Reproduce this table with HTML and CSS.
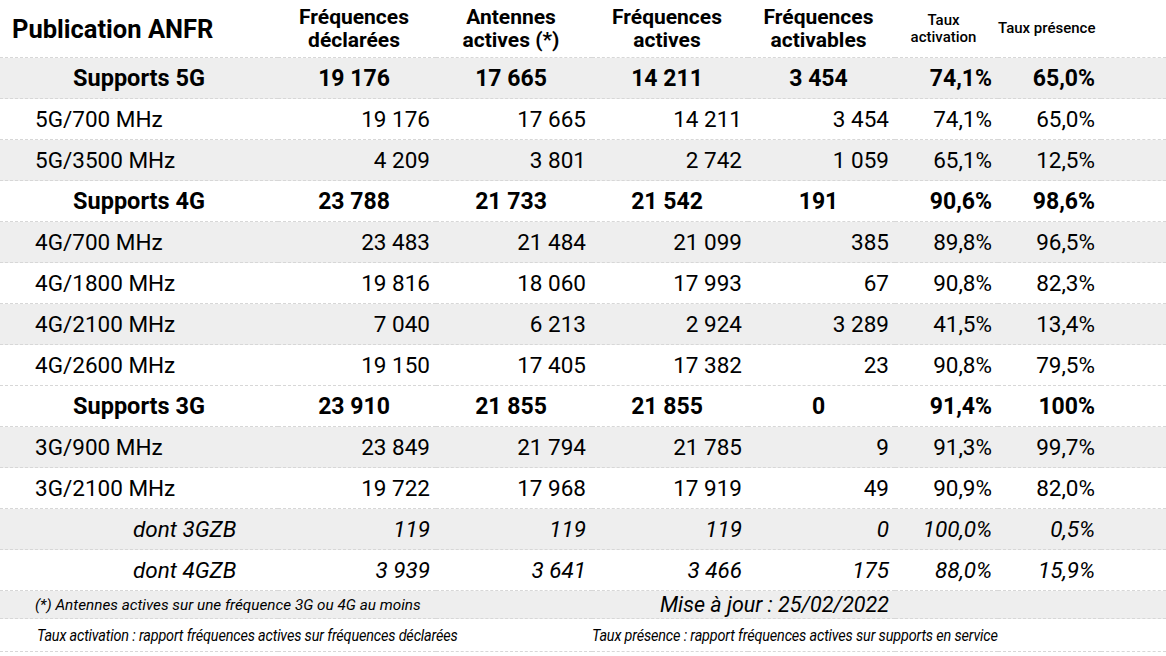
FILE: index.html
```html
<!DOCTYPE html>
<html lang="fr">
<head>
<meta charset="utf-8">
<title>Publication ANFR</title>
<link rel="stylesheet" href="styles.css">
</head>
<body>
<table class="anfr">
  <colgroup>
    <col class="c-label">
    <col class="c-n1">
    <col class="c-n2">
    <col class="c-n3">
    <col class="c-n4">
    <col class="c-p1">
    <col class="c-p2">
    <col class="c-rest">
  </colgroup>
  <thead>
    <tr class="head">
      <th class="title">Publication ANFR</th>
      <th class="colh">Fréquences<br>déclarées</th>
      <th class="colh">Antennes<br>actives (*)</th>
      <th class="colh">Fréquences<br>actives</th>
      <th class="colh">Fréquences<br>activables</th>
      <th class="colh small">Taux<br>activation</th>
      <th class="colh small">Taux présence</th>
      <th></th>
    </tr>
  </thead>
  <tbody>
    <tr class="group gray">
      <td class="glabel">Supports 5G</td>
      <td class="gnum">19 176</td><td class="gnum">17 665</td><td class="gnum">14 211</td><td class="gnum">3 454</td>
      <td class="num">74,1%</td><td class="num">65,0%</td><td></td>
    </tr>
    <tr>
      <td class="label">5G/700 MHz</td>
      <td class="num">19 176</td><td class="num">17 665</td><td class="num">14 211</td><td class="num">3 454</td>
      <td class="num">74,1%</td><td class="num">65,0%</td><td></td>
    </tr>
    <tr class="gray">
      <td class="label">5G/3500 MHz</td>
      <td class="num">4 209</td><td class="num">3 801</td><td class="num">2 742</td><td class="num">1 059</td>
      <td class="num">65,1%</td><td class="num">12,5%</td><td></td>
    </tr>
    <tr class="group">
      <td class="glabel">Supports 4G</td>
      <td class="gnum">23 788</td><td class="gnum">21 733</td><td class="gnum">21 542</td><td class="gnum">191</td>
      <td class="num">90,6%</td><td class="num">98,6%</td><td></td>
    </tr>
    <tr class="gray">
      <td class="label">4G/700 MHz</td>
      <td class="num">23 483</td><td class="num">21 484</td><td class="num">21 099</td><td class="num">385</td>
      <td class="num">89,8%</td><td class="num">96,5%</td><td></td>
    </tr>
    <tr>
      <td class="label">4G/1800 MHz</td>
      <td class="num">19 816</td><td class="num">18 060</td><td class="num">17 993</td><td class="num">67</td>
      <td class="num">90,8%</td><td class="num">82,3%</td><td></td>
    </tr>
    <tr class="gray">
      <td class="label">4G/2100 MHz</td>
      <td class="num">7 040</td><td class="num">6 213</td><td class="num">2 924</td><td class="num">3 289</td>
      <td class="num">41,5%</td><td class="num">13,4%</td><td></td>
    </tr>
    <tr>
      <td class="label">4G/2600 MHz</td>
      <td class="num">19 150</td><td class="num">17 405</td><td class="num">17 382</td><td class="num">23</td>
      <td class="num">90,8%</td><td class="num">79,5%</td><td></td>
    </tr>
    <tr class="group">
      <td class="glabel">Supports 3G</td>
      <td class="gnum">23 910</td><td class="gnum">21 855</td><td class="gnum">21 855</td><td class="gnum">0</td>
      <td class="num">91,4%</td><td class="num">100%</td><td></td>
    </tr>
    <tr class="gray">
      <td class="label">3G/900 MHz</td>
      <td class="num">23 849</td><td class="num">21 794</td><td class="num">21 785</td><td class="num">9</td>
      <td class="num">91,3%</td><td class="num">99,7%</td><td></td>
    </tr>
    <tr>
      <td class="label">3G/2100 MHz</td>
      <td class="num">19 722</td><td class="num">17 968</td><td class="num">17 919</td><td class="num">49</td>
      <td class="num">90,9%</td><td class="num">82,0%</td><td></td>
    </tr>
    <tr class="gray sub">
      <td class="slabel">dont 3GZB</td>
      <td class="num">119</td><td class="num">119</td><td class="num">119</td><td class="num">0</td>
      <td class="num">100,0%</td><td class="num">0,5%</td><td></td>
    </tr>
    <tr class="sub">
      <td class="slabel">dont 4GZB</td>
      <td class="num">3 939</td><td class="num">3 641</td><td class="num">3 466</td><td class="num">175</td>
      <td class="num">88,0%</td><td class="num">15,9%</td><td></td>
    </tr>
    <tr class="gray note">
      <td colspan="3" class="note-text">(*) Antennes actives sur une fréquence 3G ou 4G au moins</td>
      <td colspan="2" class="update">Mise à jour : 25/02/2022</td>
      <td colspan="3"></td>
    </tr>
    <tr class="legend">
      <td colspan="3" class="legend-left"><span class="cond">Taux activation : rapport fréquences actives sur fréquences déclarées</span></td>
      <td colspan="5" class="legend-right"><span class="cond">Taux présence : rapport fréquences actives sur supports en service</span></td>
    </tr>
  </tbody>
</table>
</body>
</html>
```

FILE: styles.css
```css
html, body {
  margin: 0;
  padding: 0;
  background: #ffffff;
}

body {
  font-family: Roboto, "Liberation Sans", sans-serif;
  color: #000;
  width: 1166px;
  height: 656px;
  overflow: hidden;
}

.anfr {
  width: 1166px;
  border-collapse: collapse;
  table-layout: fixed;
}

.c-label { width: 278px; }
.c-n1 { width: 158px; }
.c-n2 { width: 156px; }
.c-n3 { width: 156px; }
.c-n4 { width: 147px; }
.c-p1 { width: 103px; }
.c-p2 { width: 103px; }
.c-rest { width: 65px; }

.anfr th,
.anfr td {
  padding: 0;
  vertical-align: middle;
  white-space: nowrap;
  border-bottom: 1px dashed #d7d7d7;
}

.anfr .head th {
  height: 57px;
}

.anfr .title {
  text-align: left;
  padding-left: 12px;
  font-size: 25.5px;
  font-weight: 700;
}

.anfr .colh {
  font-size: 21px;
  font-weight: 700;
  line-height: 23px;
  text-align: center;
  padding-right: 6px;
}

.anfr .colh.small {
  font-size: 15px;
  line-height: 17px;
  font-weight: 500;
}

.anfr tbody td {
  height: 40px;
  font-size: 22.5px;
}

.anfr .gray td {
  background: #eeeeee;
}

.anfr .label {
  padding-left: 35px;
}

.anfr .glabel {
  text-align: center;
  font-weight: 700;
  font-size: 23.5px;
}

.anfr .slabel {
  padding-left: 133px;
  font-style: italic;
}

.anfr .num {
  text-align: right;
  padding-right: 6px;
}

.anfr .gnum {
  text-align: center;
  padding-right: 6px;
  font-weight: 700;
  font-size: 23px;
}

.anfr .group .num {
  font-weight: 700;
  font-size: 23px;
}

.anfr .sub .num {
  font-style: italic;
}

.anfr tbody .note td {
  height: 27px;
  font-style: italic;
}

.anfr tbody .note .note-text {
  padding-left: 35px;
  font-size: 15.3px;
}

.anfr tbody .note .update {
  font-size: 21.5px;
  text-align: right;
  padding-right: 6px;
}

.anfr tbody .legend td {
  height: 32px;
  font-size: 17px;
  font-style: italic;
}

.anfr .legend-left {
  padding-left: 37px;
}

.cond {
  display: inline-block;
  transform: scaleX(0.85);
  transform-origin: left center;
  letter-spacing: -0.2px;
}
```
